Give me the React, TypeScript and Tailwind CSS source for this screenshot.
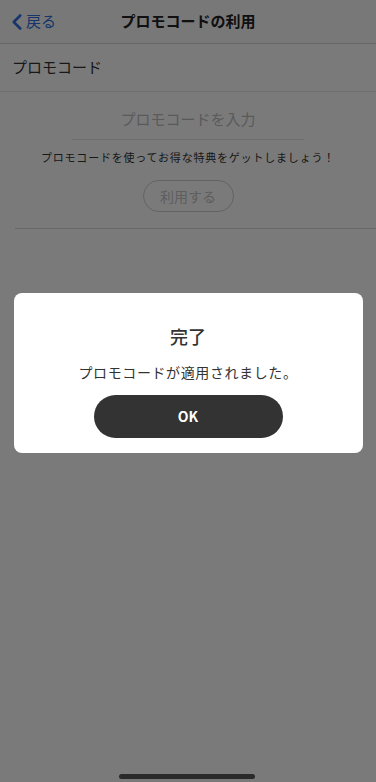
import { ChevronLeft } from 'lucide-react';

const jp = { fontFamily: '"Noto Sans CJK JP", "Noto Sans", sans-serif' };

export default function App() {
  return (
    <div style={jp} className="relative h-[782px] w-[376px] overflow-hidden bg-white text-[#222]">
      <header className="relative flex h-[44px] items-center justify-center border-b border-[#d8d8d8] bg-[#fafafa]">
        <div className="absolute left-1 top-0 flex h-full items-center text-[#2f6fe0]">
          <ChevronLeft size={26} strokeWidth={2.4} />
          <span className="-ml-1 text-[15px]">戻る</span>
        </div>
        <h1 className="text-[15px] font-bold">プロモコードの利用</h1>
      </header>

      <div className="flex h-[48px] items-center border-b border-[#e6e6e6] px-3 text-[15px] text-[#333]">
        プロモコード
      </div>

      <div className="ml-[15px] flex flex-col items-center border-b border-[#d8d8d8] pb-[16px] pr-[15px]">
        <div className="mt-[16px] w-[232px] border-b border-[#e4e4e4] pb-[8px] text-center text-[15px] text-[#bdbdbd]">
          プロモコードを入力
        </div>
        <p className="mt-[9px] text-[11px] tracking-[0.8px] text-[#333]">プロモコードを使ってお得な特典をゲットしましょう！</p>
        <button className="mt-[15px] h-[32px] w-[91px] rounded-full border border-[#cfcfcf] text-[14px] text-[#c4c4c4]">
          利用する
        </button>
      </div>

      <div className="absolute inset-0 flex items-start justify-center bg-black/[0.52] pt-[293px]">
        <div className="flex h-[160px] w-[349px] flex-col items-center rounded-[8px] bg-white">
          <h2 className="mt-[30px] text-[18px] font-medium text-[#333]">完了</h2>
          <p className="mt-[12px] text-[14px] tracking-[0.6px] text-[#333]">プロモコードが適用されました。</p>
          <button className="mt-[12px] h-[43px] w-[189px] rounded-full bg-[#333] text-[14px] font-bold text-white">
            OK
          </button>
        </div>
      </div>

      <div className="absolute bottom-[3px] left-[119px] h-[5px] w-[136px] rounded-full bg-[#2a2a2a]" />
    </div>
  );
}
